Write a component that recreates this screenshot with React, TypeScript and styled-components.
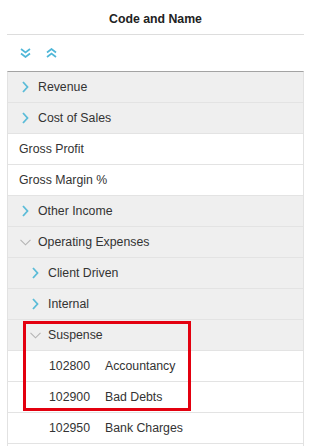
import React from 'react';
import styled, { createGlobalStyle } from 'styled-components';

const GlobalStyle = createGlobalStyle`
  body {
    margin: 0;
    background: #ffffff;
    font-family: 'Liberation Sans', Arial, sans-serif;
    color: #333333;
  }
`;

type Row = {
  label: string;
  code?: string;
  group?: boolean;
  open?: boolean;
  indent: number;
};

const rows: Row[] = [
  { label: 'Revenue', group: true, indent: 14 },
  { label: 'Cost of Sales', group: true, indent: 14 },
  { label: 'Gross Profit', indent: 11 },
  { label: 'Gross Margin %', indent: 11 },
  { label: 'Other Income', group: true, indent: 14 },
  { label: 'Operating Expenses', group: true, open: true, indent: 12 },
  { label: 'Client Driven', group: true, indent: 24 },
  { label: 'Internal', group: true, indent: 24 },
];

const highlighted: Row[] = [
  { label: 'Suspense', group: true, open: true, indent: 22 },
  { label: 'Accountancy', code: '102800', indent: 41 },
  { label: 'Bad Debts', code: '102900', indent: 41 },
];

const tail: Row[] = [
  { label: 'Bank Charges', code: '102950', indent: 41 },
  { label: '', indent: 41 },
];

const Panel = styled.div`
  width: 297px;
  margin-left: 7px;
  height: 446px;
  overflow: hidden;
`;

const Title = styled.div`
  height: 30px;
  padding-top: 4px;
  line-height: 30px;
  text-align: center;
  font-weight: bold;
  font-size: 12.3px;
  color: #222222;
  border-bottom: 1px solid #dddddd;
`;

const Toolbar = styled.div`
  display: flex;
  align-items: center;
  gap: 15px;
  height: 36px;
  padding-left: 13px;
`;

const ToolButton = styled.span`
  display: flex;
  width: 11px;
  height: 10px;
`;

const Table = styled.div`
  border-top: 1px solid #a3a3a3;
  border-left: 1px solid #e2e2e2;
  border-right: 1px solid #e2e2e2;
`;

const RowBox = styled.div<{ $group?: boolean; $indent: number }>`
  display: flex;
  align-items: center;
  height: 30px;
  padding-left: ${({ $indent }) => $indent}px;
  border-bottom: 1px solid #e3e3e3;
  background: ${({ $group }) => ($group ? '#efefef' : '#ffffff')};
  font-size: 12.3px;
  color: #333333;
`;

const Toggle = styled.span<{ $open?: boolean }>`
  display: flex;
  align-items: center;
  justify-content: center;
  width: ${({ $open }) => ($open ? '11px' : '7px')};
  margin-right: ${({ $open }) => ($open ? '7px' : '9px')};
`;

const Code = styled.span`
  width: 56px;
`;

const Highlight = styled.div`
  position: relative;
  &::after {
    content: '';
    position: absolute;
    left: 15px;
    top: 1px;
    width: 162px;
    bottom: 2px;
    border: 3px solid #e3000f;
    pointer-events: none;
  }
`;

const ChevronRight = () => (
  <svg width="7" height="12" viewBox="0 0 7 12">
    <path d="M1 1 L5.5 6 L1 11" fill="none" stroke="#5bbcd8" strokeWidth="1.8" />
  </svg>
);

const ChevronDown = () => (
  <svg width="11" height="7" viewBox="0 0 11 7">
    <path d="M0.5 0.8 L5.5 5.8 L10.5 0.8" fill="none" stroke="#b4b4b4" strokeWidth="1.1" />
  </svg>
);

const DoubleDown = () => (
  <svg width="11" height="10" viewBox="0 0 11 10">
    <path d="M1 1 L5.5 4.5 L10 1 M1 5.5 L5.5 9 L10 5.5" fill="none" stroke="#4fb7d8" strokeWidth="1.7" />
  </svg>
);

const DoubleUp = () => (
  <svg width="11" height="10" viewBox="0 0 11 10">
    <path d="M1 4.5 L5.5 1 L10 4.5 M1 9 L5.5 5.5 L10 9" fill="none" stroke="#4fb7d8" strokeWidth="1.7" />
  </svg>
);

const TreeRow: React.FC<{ row: Row }> = ({ row }) => (
  <RowBox $group={row.group} $indent={row.indent}>
    {row.group && (
      <Toggle $open={row.open}>{row.open ? <ChevronDown /> : <ChevronRight />}</Toggle>
    )}
    {row.code && <Code>{row.code}</Code>}
    <span>{row.label}</span>
  </RowBox>
);

export default function App() {
  return (
    <>
      <GlobalStyle />
      <Panel>
        <Title>Code and Name</Title>
        <Toolbar>
          <ToolButton>
            <DoubleDown />
          </ToolButton>
          <ToolButton>
            <DoubleUp />
          </ToolButton>
        </Toolbar>
        <Table>
          {rows.map((r) => (
            <TreeRow key={r.label} row={r} />
          ))}
          <Highlight>
            {highlighted.map((r) => (
              <TreeRow key={r.label} row={r} />
            ))}
          </Highlight>
          {tail.map((r, i) => (
            <TreeRow key={i} row={r} />
          ))}
        </Table>
      </Panel>
    </>
  );
}
